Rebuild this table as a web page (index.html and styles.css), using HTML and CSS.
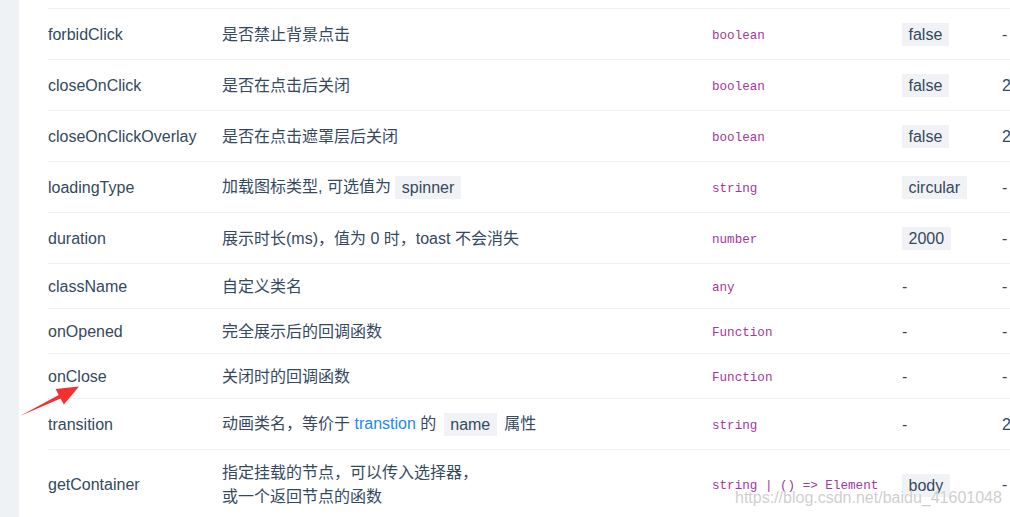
FILE: index.html
```html
<!doctype html>
<html lang="zh-CN">
  <head>
    <meta charset="UTF-8" />
    <meta name="viewport" content="width=device-width, initial-scale=1.0" />
    <title>Toast API</title>
    <link rel="stylesheet" href="styles.css">
  </head>
  <body>
    <div id="page">
      <div class="doc-card">
        <table class="api-table">
          <colgroup>
            <col class="col-name"><col class="col-desc"><col class="col-type"><col class="col-default"><col class="col-version">
          </colgroup>
          <tbody>
            <tr class="tall">
              <td>forbidClick</td>
              <td>是否禁止背景点击</td>
              <td><span class="type">boolean</span></td>
              <td><code>false</code></td>
              <td>-</td>
            </tr>
            <tr class="tall">
              <td>closeOnClick</td>
              <td>是否在点击后关闭</td>
              <td><span class="type">boolean</span></td>
              <td><code>false</code></td>
              <td>2.1.5</td>
            </tr>
            <tr class="tall">
              <td>closeOnClickOverlay</td>
              <td>是否在点击遮罩层后关闭</td>
              <td><span class="type">boolean</span></td>
              <td><code>false</code></td>
              <td>2.2.13</td>
            </tr>
            <tr class="tall">
              <td>loadingType</td>
              <td>加载图标类型, 可选值为 <code>spinner</code></td>
              <td><span class="type">string</span></td>
              <td><code>circular</code></td>
              <td>-</td>
            </tr>
            <tr class="tall">
              <td>duration</td>
              <td>展示时长(ms)，值为 0 时，toast 不会消失</td>
              <td><span class="type">number</span></td>
              <td><code>2000</code></td>
              <td>-</td>
            </tr>
            <tr class="short">
              <td>className</td>
              <td>自定义类名</td>
              <td><span class="type">any</span></td>
              <td>-</td>
              <td>-</td>
            </tr>
            <tr class="short">
              <td>onOpened</td>
              <td>完全展示后的回调函数</td>
              <td><span class="type">Function</span></td>
              <td>-</td>
              <td>-</td>
            </tr>
            <tr class="short">
              <td>onClose</td>
              <td>关闭时的回调函数</td>
              <td><span class="type">Function</span></td>
              <td>-</td>
              <td>-</td>
            </tr>
            <tr class="tall">
              <td>transition</td>
              <td>动画类名，等价于 <a href="#">transtion</a> 的 <code>name</code> 属性</td>
              <td><span class="type">string</span></td>
              <td>-</td>
              <td>2.2.6</td>
            </tr>
            <tr class="multi">
              <td>getContainer</td>
              <td>指定挂载的节点，可以传入选择器，<br>或一个返回节点的函数</td>
              <td><span class="type">string | () =&gt; Element</span></td>
              <td><code>body</code></td>
              <td>-</td>
            </tr>
          </tbody>
        </table>
      </div>
    </div>

    <!-- annotation drawn over the screenshot -->
    <svg class="mark-arrow" width="70" height="40" viewBox="15 380 70 40">
      <polygon points="20,416 60.5,398.5 63.9,404.6 79,386.5 55.6,388.9 58.7,395" fill="#f2302f"/>
    </svg>
    <div class="watermark">https://blog.csdn.net/baidu_41601048</div>
  </body>
</html>
```

FILE: styles.css
```css
:root {
  --side-bg: #eff2f5; --text: #34495e; --line: #eff1f5;
  --code-bg: #f0f2f5; --type: #a2399a; --link: #1989fa;
}
html, body { margin: 0; padding: 0; width: 100%; height: 517px; overflow: hidden; background-color: var(--side-bg); color: var(--text); font-family: "Liberation Sans", "Noto Sans CJK SC", sans-serif; font-size: 16px; }
#page { display: flex; height: 100%; }
.doc-card { flex: 1; margin-left: 19px; background-color: #fff; padding: 8px 0 0 29px; overflow: hidden; }
.api-table { border-collapse: collapse; table-layout: fixed; width: 1064px; }
.col-name { width: 174px; } .col-desc { width: 490px; } .col-type { width: 190px; } .col-default { width: 100px; } .col-version { width: 110px; }
.api-table td { padding: 1px 0 0; text-align: left; vertical-align: middle; border-top: 1px solid var(--line); white-space: nowrap; line-height: 20px; }
.api-table tr.tall td { height: 49px; }
.api-table tr.short td { height: 43px; }
.api-table tr.multi td { padding: 11px 0 12px; line-height: 24px; }
.type { font-family: "Liberation Mono", monospace; font-size: 12.6px; color: var(--type); }
code { display: inline-block; font-family: "Liberation Sans", "Noto Sans CJK SC", sans-serif; font-size: 16px; line-height: 23px; padding: 0 6.5px; background-color: var(--code-bg); vertical-align: middle; }
td code:not(:first-child) { margin: 0 3px; }
a { color: var(--link); text-decoration: none; }
.mark-arrow { position: absolute; left: 15px; top: 380px; }
.watermark { position: absolute; left: 735px; top: 489px; font-family: "Liberation Sans", sans-serif; font-size: 16px; color: rgba(190, 190, 190, 0.75); text-shadow: 0 0 2px #fff, 0 0 1px #fff; white-space: nowrap; pointer-events: none; }
```
